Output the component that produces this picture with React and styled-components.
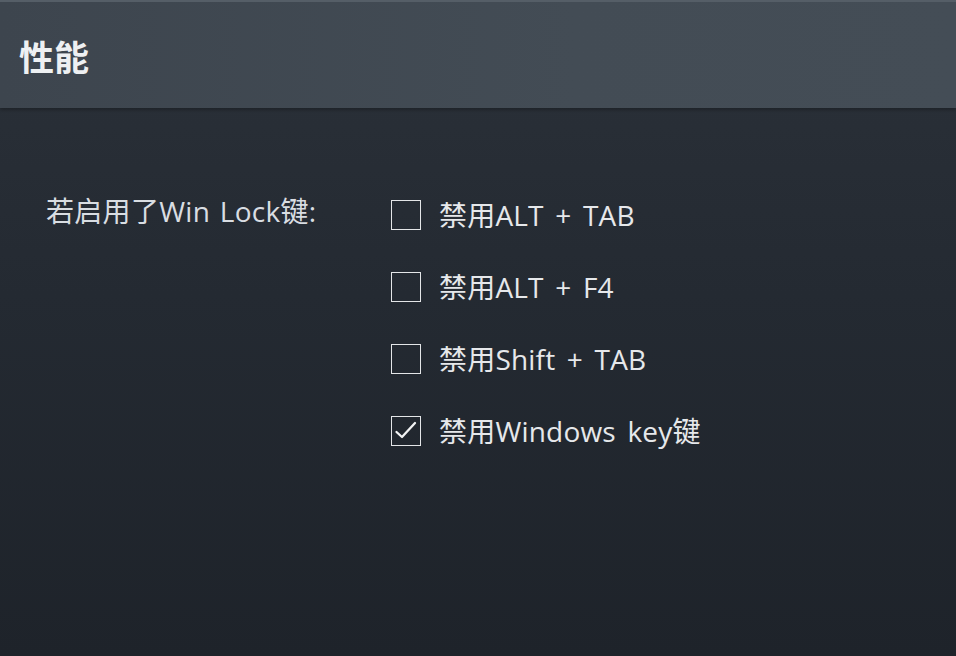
import React, { useState } from 'react';
import styled, { createGlobalStyle } from 'styled-components';

const GlobalStyle = createGlobalStyle`
  html, body {
    margin: 0;
    padding: 0;
    height: 100%;
    background: #1f242b;
  }

  body {
    font-family: "Open Sans", "Noto Sans CJK SC", sans-serif;
    overflow: hidden;
  }
`;

const Page = styled.div`
  display: flex;
  flex-direction: column;
  width: 956px;
  height: 656px;
  background: linear-gradient(180deg, #2b3139 0%, #242a32 45%, #1e232a 100%);
`;

const Header = styled.header`
  display: flex;
  align-items: center;
  height: 108px;
  padding: 0 0 0 19px;
  box-sizing: border-box;
  border-top: 2px solid #555e67;
  background: linear-gradient(90deg, #3d454e 0%, #434c55 60%, #444d56 100%);
  box-shadow: 0 2px 3px rgba(0, 0, 0, 0.25);
`;

const Title = styled.h1`
  margin: 0;
  font-family: "Noto Sans CJK SC", sans-serif;
  font-size: 35px;
  font-weight: 700;
  color: #eef0f2;
`;

const Content = styled.main`
  display: grid;
  grid-template-columns: 345px 1fr;
  padding: 87px 0 0 46px;
`;

const Label = styled.div`
  font-size: 28px;
  color: #d9dde2;
  line-height: 40px;
  word-spacing: 2px;
  letter-spacing: 0.3px;
  margin-top: -4px;
`;

const Options = styled.div`
  display: flex;
  flex-direction: column;
  gap: 32px;
`;

const Option = styled.label`
  display: flex;
  align-items: center;
  gap: 18px;
  height: 40px;
  cursor: pointer;
`;

const Box = styled.span`
  position: relative;
  width: 30px;
  height: 30px;
  box-sizing: border-box;
  border: 1.5px solid #e4e6e8;
  flex-shrink: 0;

  svg {
    position: absolute;
    left: 0;
    top: 0;
  }
`;

const OptionText = styled.span`
  font-size: 28px;
  color: #e6e8eb;
  line-height: 40px;
  word-spacing: 4px;
  letter-spacing: 0.2px;
`;

const options = [
  { id: 'alttab', text: '禁用ALT + TAB', checked: false },
  { id: 'altf4', text: '禁用ALT + F4', checked: false },
  { id: 'shifttab', text: '禁用Shift + TAB', checked: false },
  { id: 'winkey', text: '禁用Windows key键', checked: true },
];

function Check() {
  return (
    <svg width="27" height="27" viewBox="0 0 27 27" fill="none">
      <path d="M4.5 15 L10 20 L23 6" stroke="#f2f3f4" strokeWidth="2.3" strokeLinecap="round" strokeLinejoin="round" />
    </svg>
  );
}

export default function App() {
  const [state, setState] = useState(
    Object.fromEntries(options.map((o) => [o.id, o.checked]))
  );

  return (
    <>
      <GlobalStyle />
      <Page>
        <Header>
          <Title>性能</Title>
        </Header>
        <Content>
          <Label>若启用了Win Lock键:</Label>
          <Options>
            {options.map((o) => (
              <Option key={o.id} onClick={() => setState({ ...state, [o.id]: !state[o.id] })}>
                <Box>{state[o.id] && <Check />}</Box>
                <OptionText>{o.text}</OptionText>
              </Option>
            ))}
          </Options>
        </Content>
      </Page>
    </>
  );
}
